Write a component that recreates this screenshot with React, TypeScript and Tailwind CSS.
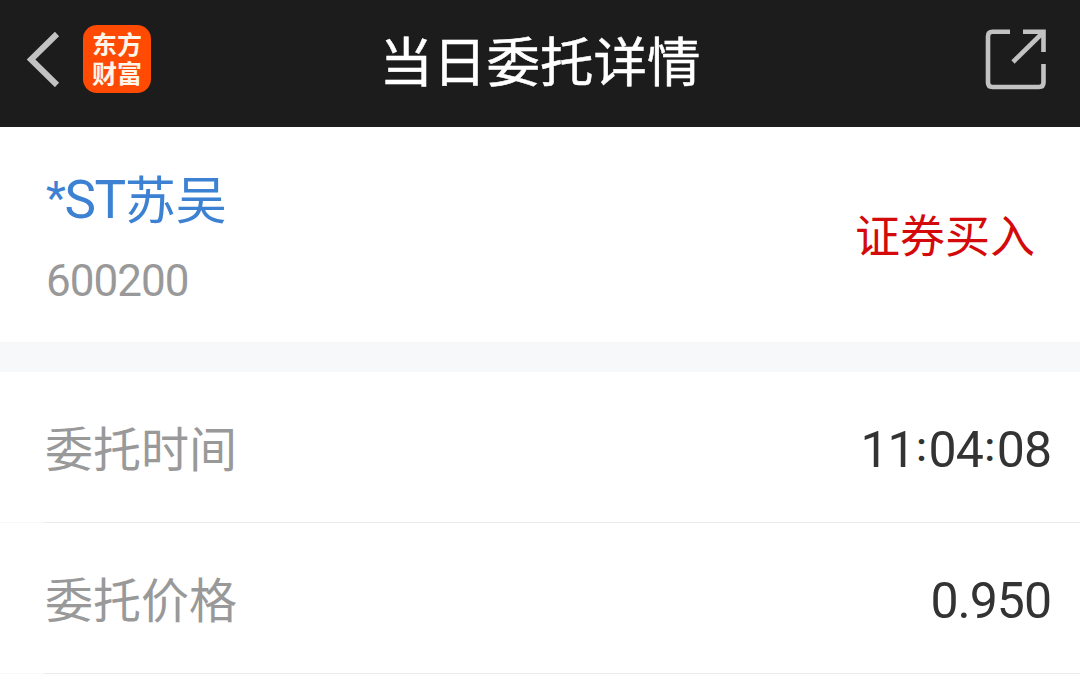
interface OrderField {
  label: string;
  value: string;
}

const fields: OrderField[] = [
  { label: "委托时间", value: "11:04:08" },
  { label: "委托价格", value: "0.950" },
];

function BackIcon() {
  return (
    <svg className="w-9 h-14" viewBox="0 0 36 56" fill="none" stroke="#c2c2c2" strokeWidth="6">
      <path d="M33 3 L7 28.5 L33 54" />
    </svg>
  );
}

function ShareIcon() {
  return (
    <svg className="w-[62px] h-[62px]" viewBox="0 0 62 62" fill="none" stroke="#c2c2c2" strokeWidth="4.6">
      <path d="M25 3.8 H7.5 Q3 3.8 3 8.3 V54.5 Q3 59 7.5 59 H54 Q58.5 59 58.5 54.5 V36" />
      <path d="M38 3.8 H58.5 V24" />
      <path d="M57 5.5 L28 34" />
    </svg>
  );
}

function AppLogo() {
  return (
    <div className="w-[68px] h-[68px] rounded-[14px] bg-[#ff4a03] pl-[9px] pt-[4px] text-[#fff6ea] text-[25px] leading-[29px] font-bold">
      <p className="w-[52px] break-all">东方财富</p>
    </div>
  );
}

// the colon sits centred on the digits instead of on the baseline
function Value({ text }: { text: string }) {
  return (
    <span className="pt-[5px] text-[50px] leading-[80px] tracking-[-1px] text-[#333333] font-['Roboto',sans-serif]">
      {text.split(":").map((part, i) => (
        <span key={i}>
          {i > 0 && (
            <span className="relative -top-1.5 inline-block w-[14px] text-center text-[40px] leading-none font-medium tracking-normal">:</span>
          )}
          {part}
        </span>
      ))}
    </span>
  );
}

export default function App() {
  return (
    <div className="w-[1080px] h-[690px] overflow-hidden bg-white font-['Noto_Sans_CJK_SC',sans-serif]">
      <header className="h-[127px] bg-[#1c1c1c] grid grid-cols-[1fr_auto_1fr] items-start">
        <div className="flex items-center pl-6 pt-[25px]">
          <button className="mr-[23px]">
            <BackIcon />
          </button>
          <AppLogo />
        </div>
        <h1 className="pt-[19px] text-[53.5px] leading-[80px] text-white [-webkit-text-stroke:0.5px_#fff]">当日委托详情</h1>
        <button className="justify-self-end mr-[33px] mt-[28px]">
          <ShareIcon />
        </button>
      </header>

      <section className="h-[215px] flex items-start justify-between pl-[46px] pr-[45px]">
        <div className="pt-[30px]">
          <div className="h-20 flex items-center text-[#3c81d2] text-[51px]">
            <span className="pt-2 font-['Roboto',sans-serif] text-[53px] tracking-[-1.4px]">
              <span className="relative -top-1 text-[46px]">*</span>ST
            </span>
            <span>苏吴</span>
          </div>
          <div className="mt-1 h-20 leading-[80px] text-[44px] tracking-[-1px] text-[#999999] font-['Roboto',sans-serif]">600200</div>
        </div>
        <div className="pt-[67px] text-[45px] leading-[80px] text-[#d40a0a]">证券买入</div>
      </section>

      <div className="h-[30px] bg-[#f7f8fa]" />

      {fields.map((field) => (
        <div key={field.label} className="h-[151px]">
          <div className="h-[150px] flex items-center justify-between pl-[45px] pr-[29px]">
            <span className="pb-[3px] text-[48px] leading-[80px] text-[#999999]">{field.label}</span>
            <Value text={field.value} />
          </div>
          <div className="h-px bg-[#f8f8f8] pl-11">
            <div className="h-px bg-[#ebebeb]" />
          </div>
        </div>
      ))}
    </div>
  );
}
